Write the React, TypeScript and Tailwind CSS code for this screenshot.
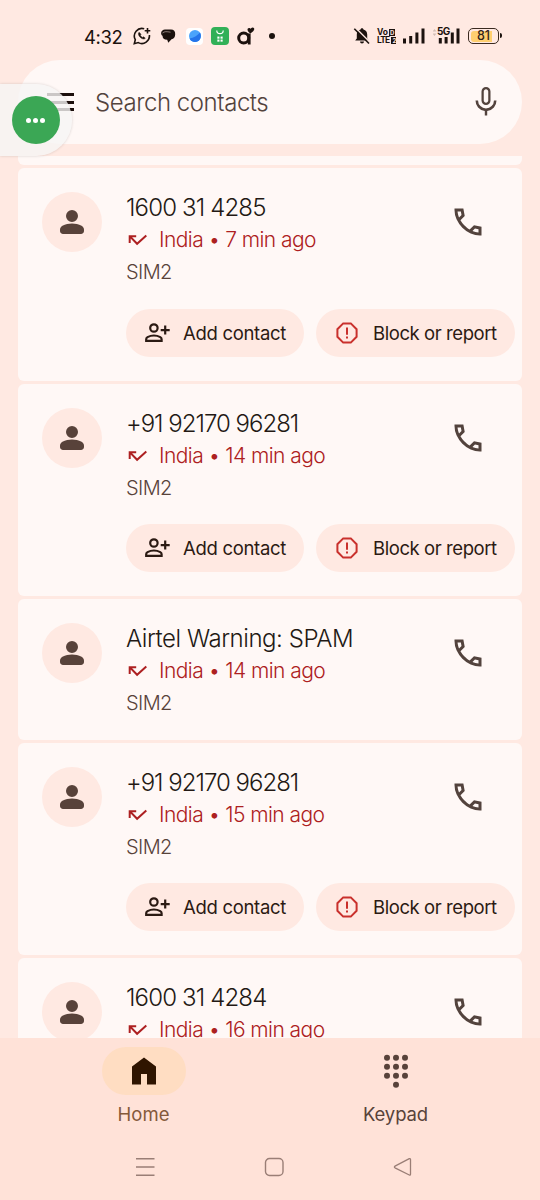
import type { ReactNode } from "react";

type Call = {
  id: number;
  name: string;
  nameClass: string;
  time: string;
  actions: boolean;
};

const calls: Call[] = [
  { id: 1, name: "1600 31 4285", nameClass: "tracking-[-0.85px]", time: "7 min ago", actions: true },
  { id: 2, name: "+91 92170 96281", nameClass: "tracking-[-1px]", time: "14 min ago", actions: true },
  { id: 3, name: "Airtel Warning: SPAM", nameClass: "tracking-[-0.45px]", time: "14 min ago", actions: false },
  { id: 4, name: "+91 92170 96281", nameClass: "tracking-[-1px]", time: "15 min ago", actions: true },
  { id: 5, name: "1600 31 4284", nameClass: "tracking-[-0.85px]", time: "16 min ago", actions: false },
];

const Icon = ({ children, className = "size-9" }: { children: ReactNode; className?: string }) => (
  <svg viewBox="0 0 24 24" fill="currentColor" fillRule="evenodd" className={`shrink-0 ${className}`}>
    {children}
  </svg>
);

const PersonIcon = () => (
  <Icon>
    <path d="M12 12q-1.65 0-2.825-1.175T8 8t1.175-2.825T12 4t2.825 1.175T16 8t-1.175 2.825T12 12M4 18v-.8q0-.85.438-1.562T5.6 14.55q1.55-.775 3.15-1.162T12 13t3.25.388 3.15 1.162q.725.375 1.163 1.088T20 17.2v.8q0 .825-.587 1.413T18 20H6q-.825 0-1.412-.587T4 18" />
  </Icon>
);

const PhoneIcon = () => (
  <Icon>
    <path d="M21 21h-1.05q-3.125 0-6.175-1.362T8.225 15.775 4.363 10.225 3 4.05V3h5.9l.925 5.025-2.85 2.875q.5.925 1.187 1.787t1.513 1.663q.775.775 1.625 1.438t1.8 1.212l2.9-2.9 5 1.02zM6.025 9l1.65-1.65L7.25 5H5.025q.125 1.025.35 2.025T6.025 9m8.95 8.95q.975.425 1.988.675T19 18.95v-2.2l-2.35-.475z" />
  </Icon>
);

const MicIcon = () => (
  <Icon>
    <path d="M12 14q-1.25 0-2.125-.875T9 11V5q0-1.25.875-2.125T12 2t2.125.875T15 5v6q0 1.25-.875 2.125T12 14m0-1.5q.6 0 1.050-.45T13.500 11V5q0-.6-.45-1.050T12 3.500t-1.050.45T10.500 5v6q0 .6.450 1.050T12 12.500m-.8 8.500v-3.075q-2.800-.35-4.500-2.325T5 11h1.700q0 2.175 1.563 3.738T12 16.300t3.738-1.563T17.300 11H19q0 2.625-1.700 4.600T12.800 17.925V21z" />
  </Icon>
);

const MissedIcon = () => (
  <svg viewBox="0 0 20 12" fill="none" stroke="currentColor" strokeWidth="2" className="ml-0.5 h-3 w-5 shrink-0">
    <path d="M1.7 9V2.2H8.2M1.9 2.4l7.2 7.4 9.2-8.2" />
  </svg>
);

const AddPersonIcon = () => (
  <svg viewBox="0 0 26 20" fill="none" stroke="currentColor" strokeWidth="2.2" className="ml-[18px] h-5 w-[26px] shrink-0">
    <circle cx="9.9" cy="5" r="3.7" />
    <path d="M2.2 17.9v-1.7q0-1.4 1.3-2.1 3-1.6 6.4-1.6t6.4 1.6q1.3.7 1.3 2.1v1.7zM21.2 2.6v9M16.7 7.1h9" />
  </svg>
);

const ReportIcon = () => (
  <svg viewBox="0 0 22 22" fill="none" stroke="currentColor" strokeWidth="2" className="ml-5 size-[22px] shrink-0 text-[#c9302c]">
    <path d="M7.2 1.4h7.6l5.8 5.8v7.6l-5.8 5.8H7.2l-5.8-5.8V7.2zM11 5.4v7.400M11 14.400v2.200" />
  </svg>
);

const StatusBar = () => (
  <header className="flex h-[60px] shrink-0 items-center pt-3 pl-[84px] text-[#1c120e]">
    <span className="w-[49px] pt-px text-[18.5px] leading-6 font-normal tracking-[-0.4px]">4:32</span>
    {/* WhatsApp */}
    <svg viewBox="0 0 18 18" fill="none" stroke="currentColor" strokeWidth="1.6" className="size-[18px]">
      <path d="M11.2 1.8A7.6 7.6 0 0 0 2.3 12.7L1.3 16.7l4-1.1A7.6 7.6 0 0 0 16.4 8" />
      <path d="M14.5 1v5.6M11.7 3.8h5.6" />
      <path d="M6.1 5.3c-1.3 1.1-.6 3.4 1.1 5s3.9 2.3 5.1 1l-1.7-1.5-1.2.6c-1-.5-1.7-1.2-2.1-2.1l.7-1z" fill="currentColor" strokeWidth=".5" />
    </svg>
    {/* Messages */}
    <svg viewBox="0 0 16 16" className="ml-[9px] size-4">
      <path d="M5 1.500h6C13.800 1.500 15.400 3.500 15.200 6.300c0 2.800-1.500 4.600-3.700 4.900L8.300 14.800 7.200 11.800C4 11.800 2.600 10.200 2.500 7.800.2 6.500.6 2 5 1.500z" fill="currentColor" />
      <path d="M2.500 5c2-1.700 4-1.500 8-.8" fill="none" stroke="#ffe9e2" strokeWidth=".5" />
    </svg>
    <span className="ml-[10px] flex size-[17px] items-center justify-center rounded bg-white">
      <svg viewBox="0 0 14 14" className="size-[14px]">
        <circle cx="7" cy="7" r="6" fill="#4aa3fb" />
        <path d="M1.5 9.5C6 9 9 6.5 12 3.5 14 7 12.5 13 7 13c-2.5 0-4.6-1.2-5.5-3.5z" fill="#2474ea" />
      </svg>
    </span>
    <span className="ml-2 flex size-[18px] items-center justify-center rounded bg-[#31b057]">
      <svg viewBox="0 0 18 18" fill="none" stroke="white" className="size-[18px]">
        <path d="M5.8 3.5a3.2 3.2 0 0 0 6.4 0" strokeWidth="1.2" />
        <path d="M6.5 9.7h1.8v1.8H6.500zM9.700 9.700h1.800v1.800H9.700zM6.500 12.700h1.800v1.800H6.500zM9.700 12.700h1.800v1.800H9.700z" fill="white" strokeWidth=".3" />
      </svg>
    </span>
    <svg viewBox="0 0 18 20" fill="none" stroke="currentColor" className="ml-2 h-5 w-[18px]">
      <circle cx="6.7" cy="12" r="5" strokeWidth="3" />
      <path d="M12.2 7.500v11" strokeWidth="2.8" />
      <path d="M13.4 7.500C10 5.300 9.700 2.300 12 2c1 0 1.500.8 1.500.8S14.800 1 16.400 1.700c2 1.100.4 3.900-3 5.800z" fill="currentColor" stroke="none" />
    </svg>
    <span className="ml-[14px] size-[6px] rounded-full bg-current" />

    {/* Muted bell */}
    <svg viewBox="0 0 18 18" className="ml-[78px] size-[18px]">
      <path d="M9 1.2c.9 0 1.4.6 1.4 1.3 2.5.7 3.8 2.6 3.8 5v4l1.600 2H2.200l1.600-2v-4c0-2.400 1.300-4.300 3.800-5 0-.7.500-1.300 1.400-1.300zM7 14.500h4a2 2 0 0 1-4 0z" fill="currentColor" />
      <path d="M2.5.8 17 15.300" stroke="#ffe9e2" strokeWidth="1.500" />
      <path d="M1.3 1.8 16 16.500" stroke="currentColor" strokeWidth="1.600" />
    </svg>
    <span className="ml-[6px] flex w-[19px] flex-col gap-px text-[8.5px] leading-[7px] font-bold">
      <span className="flex items-center gap-px">
        Vo
        <span className="flex h-[7px] w-[6px] items-center justify-center bg-current text-[6px]">
          <span className="text-[#ffe9e2]">D</span>
        </span>
      </span>
      <span className="flex items-center tracking-[-0.8px]">
        LTE
        <span className="ml-[2px] flex h-[7px] w-[5px] shrink-0 items-center justify-center bg-current text-[6px]">
          <span className="text-[#ffe9e2]">2</span>
        </span>
      </span>
    </span>
    <svg viewBox="0 0 22 16" fill="currentColor" className="ml-[7px] h-4 w-[22px]">
      <path d="M0 10.500h3v5H0zM6.200 8h3v7.500h-3zM12.400 4.500h3v11h-3zM18.500.5h3v15h-3z" />
    </svg>
    <span className="relative ml-[8px] h-4 w-[27px]">
      <svg viewBox="0 0 27 16" fill="currentColor" className="h-4 w-[27px]">
        <path d="M5.8 10h3v5.5h-3zM11.600 9h3v6.500h-3zM17.800 4.500h3v11h-3zM23.500.5h3v15h-3z" />
        <path d="M-.5 3.500 1.500 1l2 2.500zM-.5 5.500l2 2.500 2-2.500z" opacity=".2" />
      </svg>
      <span className="absolute -top-[3px] left-[4px] text-[10px] leading-3 font-bold tracking-[-0.6px]">5G</span>
    </span>
    <span className="relative ml-[8px] flex h-4 w-[31px] items-center justify-center rounded-[5px] border-[1.5px] border-[#3a2a20] p-[1.5px]">
      <span className="flex h-full w-full items-center justify-center rounded-[3px] bg-linear-to-r from-[#ffcf70] from-80% to-transparent to-80% text-[12.5px] leading-3 font-medium text-[#33231a]">81</span>
      <span className="absolute top-1 -right-[3.5px] h-[5px] w-[2px] rounded-r bg-current" />
    </span>
  </header>
);

const CallCard = ({ call }: { call: Call }) => (
  <article className={`flex shrink-0 rounded-md bg-[#fff8f6] pt-6 pl-6 ${call.actions ? "h-[212.5px]" : "h-[140.5px]"}`}>
    <div className="flex size-[60px] shrink-0 items-center justify-center rounded-full bg-[#ffe9e2] text-[#58423a]">
      <PersonIcon />
    </div>
    <div className="ml-6 min-w-0 flex-1">
      <div className="flex justify-between">
        <div className="whitespace-nowrap">
          <h2 className={`text-[24px] leading-8 font-[340] text-[#231914] ${call.nameClass}`}>{call.name}</h2>
          <p className="flex items-center text-[21px] leading-8 font-[340] text-[#ad2021]">
            <MissedIcon />
            <span className="ml-[11px] tracking-[-0.55px]">India • {call.time}</span>
          </p>
          <p className="text-[20px] leading-8 font-[340] tracking-[-0.6px] text-[#58423a]">SIM2</p>
        </div>
        <button className="mt-3 mr-9 size-9 text-[#53433d]" aria-label="Call">
          <PhoneIcon />
        </button>
      </div>
      {call.actions && (
        <div className="mt-[20.5px] flex gap-3 text-[18.5px] text-[#2b1a13]">
          <button className="flex h-12 w-[178px] shrink-0 items-center rounded-full bg-[#ffe9e2] whitespace-nowrap">
            <AddPersonIcon />
            <span className="ml-[13px] pt-0.5 tracking-[-0.3px]">Add contact</span>
          </button>
          <button className="flex h-12 w-[199px] shrink-0 items-center rounded-full bg-[#ffe9e2] whitespace-nowrap">
            <ReportIcon />
            <span className="ml-[15px] pt-0.5 tracking-[-0.42px]">Block or report</span>
          </button>
        </div>
      )}
    </div>
  </article>
);

const BottomNav = () => (
  <nav className="h-[162px] shrink-0 bg-[#ffe2d8]">
    <div className="flex px-[18px] pt-[9px] text-[18.5px] leading-6">
      <div className="flex w-[251px] flex-col items-center text-[#84593a]">
        <span className="flex h-12 w-[84px] items-center justify-center rounded-full bg-[#ffddc2] text-[#2f1500]">
          <Icon>
            <path d="M4 21V9l8-6 8 6v12h-6v-7h-4v7z" />
          </Icon>
        </span>
        <span className="mt-[7px]">Home</span>
      </div>
      <div className="flex w-[253px] flex-col items-center text-[#58423a]">
        <span className="flex h-12 items-center">
          <Icon>
            {[3.1, 9.1, 15.1, 21.1].map((y, row) =>
              [6, 12, 18].map((x) => (row < 3 || x === 12) && <circle key={`${x}-${y}`} cx={x} cy={y} r="2" />)
            )}
          </Icon>
        </span>
        <span className="mt-[7px] tracking-[-0.1px]">Keypad</span>
      </div>
    </div>
    {/* System navigation */}
    <div className="mt-[31px] flex pl-[135px] text-[#9a7e76]">
      <svg viewBox="0 0 20 20" fill="none" stroke="currentColor" strokeWidth="1.4" className="size-5">
        <path d="M1 1.8h18.5M1 10h18.5M1 18.3h18.5" />
      </svg>
      <svg viewBox="0 0 20 20" fill="none" stroke="currentColor" strokeWidth="1.4" className="ml-[109px] size-5">
        <rect x="1.5" y="1.5" width="17.5" height="17" rx="4" />
      </svg>
      <svg viewBox="0 0 20 20" fill="none" stroke="currentColor" strokeWidth="1.3" strokeLinejoin="round" className="ml-[109px] size-5">
        <path d="M16.3 1.7Q17.5 1.2 17.5 2.600V17q0 1.500-1.200 1L2 10.800q-1.200-.9 0-1.700z" />
      </svg>
    </div>
  </nav>
);

export default function App() {
  return (
    <div className="relative flex h-[1200px] w-[540px] flex-col overflow-hidden bg-[#ffe9e2] font-[Inter,sans-serif]">
      <StatusBar />
      <div className="mx-[18px] flex h-[84px] shrink-0 items-center rounded-full bg-[#fff8f6] text-[#53433d]">
        <span className="ml-[29px] flex w-[27px] flex-col gap-[4.5px] text-[#1c0f0c]">
          <span className="h-[3px] bg-current" />
          <span className="h-[3px] bg-current" />
          <span className="h-[3px] bg-current" />
        </span>
        <span className="ml-[21px] flex-1 pt-0.5 text-[24px] leading-8 font-[340] tracking-[-0.45px]">Search contacts</span>
        <span className="mr-[18px]">
          <MicIcon />
        </span>
      </div>

      <main className="mx-[18px] mt-3 flex min-h-0 flex-1 flex-col gap-[3px] overflow-hidden">
        <div className="h-[9px] shrink-0 rounded-b-md bg-[#fff8f6]" />
        {calls.map((call) => (
          <CallCard key={call.id} call={call} />
        ))}
      </main>
      <BottomNav />

      {/* Floating bubble docked at the left edge */}
      <div className="absolute top-[84px] left-0 flex h-[72px] w-[72px] items-center rounded-r-full bg-[#f6f5f5]/80 pl-[11.5px] shadow-[0_0_3px_rgba(0,0,0,0.16)]">
        <div className="flex size-12 items-center justify-center gap-[2px] rounded-full bg-[#3ba755]">
          <span className="size-[5px] rounded-full bg-white" />
          <span className="size-[5px] rounded-full bg-white" />
          <span className="size-[5px] rounded-full bg-white" />
        </div>
      </div>
    </div>
  );
}
